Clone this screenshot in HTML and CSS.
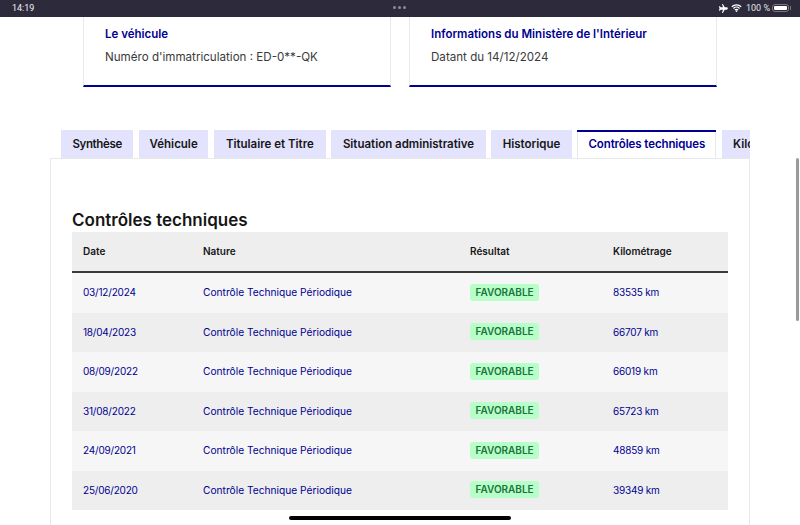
FILE: index.html
```html
<!DOCTYPE html>
<html lang="fr">
<head>
<meta charset="utf-8">
<title>Contrôles techniques</title>
<link rel="stylesheet" href="styles.css">
</head>
<body>
<header class="status">
  <span class="time">14:19</span>
  <span class="dots"><i></i><i></i><i></i></span>
  <span class="sys">
    <svg class="plane" width="10" height="9" viewBox="0 0 11 10"><path fill="#fff" d="M4.400 0h1l2 3.700h2.200c.7 0 1.200.6 1.200 1.300s-.5 1.300-1.200 1.300H7.400L5.400 10h-1l1-3.700H3L2 7.500H1L1.600 5 1 2.500h1l1 1.200h2.400z"/></svg>
    <svg class="wifi" width="11" height="8" viewBox="0 0 12 9"><path fill="none" stroke="#fff" stroke-width="1.400" d="M.7 3.100a7.500 7.500 0 0 1 10.600 0M2.500 5a5 5 0 0 1 7 0M4.200 6.800a2.500 2.500 0 0 1 3.600 0"/><circle cx="6" cy="8" r="1" fill="#fff"/></svg>
    <span class="pct">100 %</span>
    <span class="battery"><b></b></span>
  </span>
</header>

<main class="page">
  <section class="cards">
    <article class="card">
      <h2>Le véhicule</h2>
      <p>Numéro d'immatriculation : ED-0**-QK</p>
    </article>
    <article class="card">
      <h2>Informations du Ministère de l'Intérieur</h2>
      <p>Datant du 14/12/2024</p>
    </article>
  </section>

  <nav class="tabs">
    <a class="tab tab-first">Synthèse</a>
    <a class="tab">Véhicule</a>
    <a class="tab">Titulaire et Titre</a>
    <a class="tab">Situation administrative</a>
    <a class="tab">Historique</a>
    <a class="tab active">Contrôles techniques</a>
    <a class="tab tab-last">Kilométrage</a>
  </nav>

  <section class="panel">
    <h1>Contrôles techniques</h1>
    <div class="table">
      <div class="row head"><span>Date</span><span>Nature</span><span>Résultat</span><span>Kilométrage</span></div>
      <div class="row"><a class="num">03/12/2024</a><a>Contrôle Technique Périodique</a><span><em class="badge">FAVORABLE</em></span><a class="num">83535 km</a></div>
      <div class="row"><a class="num">18/04/2023</a><a>Contrôle Technique Périodique</a><span><em class="badge">FAVORABLE</em></span><a class="num">66707 km</a></div>
      <div class="row"><a class="num">08/09/2022</a><a>Contrôle Technique Périodique</a><span><em class="badge">FAVORABLE</em></span><a class="num">66019 km</a></div>
      <div class="row"><a class="num">31/08/2022</a><a>Contrôle Technique Périodique</a><span><em class="badge">FAVORABLE</em></span><a class="num">65723 km</a></div>
      <div class="row"><a class="num">24/09/2021</a><a>Contrôle Technique Périodique</a><span><em class="badge">FAVORABLE</em></span><a class="num">48859 km</a></div>
      <div class="row"><a class="num">25/06/2020</a><a>Contrôle Technique Périodique</a><span><em class="badge">FAVORABLE</em></span><a class="num">39349 km</a></div>
    </div>
  </section>
</main>

<div class="scrollbar"></div>
<div class="home"></div>
</body>
</html>
```

FILE: styles.css
```css
* { box-sizing: border-box; }
html, body { margin: 0; height: 525px; overflow: hidden; background: #fff; }
body { font-family: "Inter", "Liberation Sans", sans-serif; color: #161616; position: relative; }

.status { height: 17px; background: #2d2a3b; color: #f2f2f2; display: flex; align-items: center; justify-content: space-between; padding: 0 11px 1px 12px; font-family: "Roboto", sans-serif; font-size: 9px; position: relative; }
.dots { position: absolute; left: 393px; top: 6px; display: flex; gap: 2px; }
.dots i { width: 3px; height: 3px; border-radius: 50%; background: #8d8b97; }
.sys { display: flex; align-items: center; gap: 3px; }
.pct { color: #e4e4e8; margin-left: 1px; }
.battery { width: 17px; height: 8px; border: 1px solid #77757f; border-radius: 3px; padding: 1px; display: block; position: relative; margin-left: -1px; }
.battery b { display: block; height: 100%; background: #fff; border-radius: 1px; }
.battery::after { content: ""; position: absolute; right: -3px; top: 1px; width: 1px; height: 4px; background: #77757f; }

.cards { display: grid; grid-template-columns: 308px 308px; gap: 18px; padding-left: 83px; }
.card { height: 70px; border: 1px solid #e8e8ee; border-top: 0; border-bottom: 2px solid #000091; padding: 9px 21px 0; }
.card h2 { margin: 0; font-size: 11.500px; line-height: 16px; font-weight: 600; color: #000091; }
.card p { margin: 7px 0 0; font-size: 11.600px; line-height: 16px; color: #3a3a3a; }

.tabs { display: grid; grid-template-columns: 72.300px 69.300px 111.700px 154.300px 80.300px 139px 60px; column-gap: 5.700px; margin: 43px 0 0 61px; width: 689px; height: 28px; overflow: hidden; }
.tab { height: 28px; background: #e3e3fd; font-size: 11.500px; font-weight: 600; line-height: 28px; text-align: center; white-space: nowrap; color: #161616; }
.tab-first { letter-spacing: -.35px; }
.tab-last { text-align: left; padding-left: 11px; }
.tab.active { background: #fff; color: #000091; border-top: 2px solid #000091; line-height: 25px; letter-spacing: -.1px; box-shadow: inset 1px 0 0 #e8e8e8, inset -1px 0 0 #e8e8e8; }

.panel { width: 700px; margin-left: 50px; height: 367px; border: 1px solid #e8e8e8; border-bottom: 0; padding: 51px 21px 0; }
.panel h1 { margin: 0 0 1px; font-size: 17px; line-height: 21px; font-weight: 600; color: #161616; }

.table { font-size: 10.200px; }
.row { display: grid; grid-template-columns: 120px 267px 143px 1fr; align-items: center; height: 39.500px; padding: 0 0 1px 11px; background: #eee; color: #000091; }
.row:nth-child(even) { background: #f6f6f6; }
.row.head { height: 41px; background: #eee; border-bottom: 2px solid #3a3a3a; color: #161616; font-size: 10px; font-weight: 600; padding-bottom: 2px; }
.num { font-size: 10px; letter-spacing: -.2px; }
.badge { display: inline-block; font-style: normal; font-weight: 600; font-size: 10px; line-height: 17px; padding: 0 5.500px; border-radius: 3px; background: #b8fec9; color: #18753c; vertical-align: middle; }

.scrollbar { position: absolute; left: 796px; top: 158px; width: 3px; height: 163px; border-radius: 2px; background: #9a9a9a; }
.home { position: absolute; left: 289px; top: 516px; width: 222px; height: 4px; border-radius: 2px; background: #000; }
```
